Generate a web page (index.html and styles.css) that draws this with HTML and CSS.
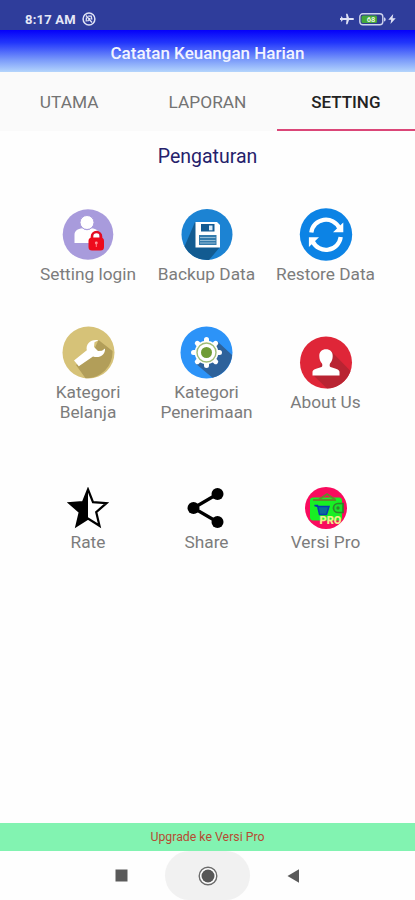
FILE: index.html
```html
<!DOCTYPE html>
<html lang="id">
<head>
<meta charset="utf-8">
<title>Catatan Keuangan Harian</title>
<link rel="stylesheet" href="styles.css">
</head>
<body>
<div class="statusbar">
  <span class="time">8:17 AM</span>
  <svg class="badge" width="14" height="14" viewBox="0 0 14 14" fill="none" stroke="#dfe2f5"><circle cx="7" cy="7" r="5.900" stroke-width="1.500"/><path d="M4 3.500l6 7M4.200 9.500l.2-4M6.200 4.200h3l.7 3.400M5.500 9.300l2.800-3" stroke-width="1.300"/></svg>
  <span class="spacer"></span>
  <svg width="14" height="12" viewBox="0 0 14 12" fill="#dfe2f5"><path d="M14 6c0-.7-.6-1.100-1.300-1.100H9L7.500.8H6l.5 4.100H2.800L1.700 3.600H.8L1.200 5.100H0v1.800h1.200L.8 8.400h.9L2.800 7.100h3.700L6 11.200h1.500L9 7.100h3.700c.7 0 1.300-.4 1.300-1.100z"/></svg>
  <svg class="battery" width="27" height="13" viewBox="0 0 27 13"><rect x=".8" y=".8" width="23" height="11" rx="3" fill="#2f3d91" stroke="#cfd4ef" stroke-width="1.400"/><rect x="2.500" y="2.500" width="15.500" height="7.600" rx="1.500" fill="#43a83b"/><path d="M25 4.200q1.700.3 1.700 2.200t-1.700 2.200z" fill="#cfd4ef"/><text class="charge" x="12" y="9.200" text-anchor="middle">68</text></svg>
  <svg class="bolt" width="8" height="12" viewBox="0 0 8 12" fill="#dfe2f5"><path d="M5.200 1L.3 6.800h2.900L2.500 11 7.700 5.200H4.600z"/></svg>
</div>
<header class="header">Catatan Keuangan Harian</header>
<nav class="tabs">
  <div class="tab">UTAMA</div>
  <div class="tab">LAPORAN</div>
  <div class="tab active">SETTING</div>
</nav>
<main class="main">
  <h1 class="title">Pengaturan</h1>
  <div class="grid">
    <div class="item">
      <svg width="52" height="53" viewBox="0 0 52 53"><circle cx="26" cy="26.500" r="25.300" fill="#a89bdc"/><path d="M12.500 35V27c0-4 3-6.500 8-6.800q4.500 4.200 9 0c5 .3 7.500 2.800 7.500 6.800v8z" fill="#fff"/><circle cx="25" cy="14.500" r="7" fill="#fff" stroke="#a89bdc"/><path d="M30 32v-3.500a4.500 4.500 0 0 1 9 0V32" fill="none" stroke="#e30b22" stroke-width="2.600"/><rect x="26.500" y="29.500" width="15.500" height="13" rx="3.500" fill="#ee0a1c"/><circle cx="34.300" cy="35" r="1.400" fill="#ff9b9f"/><path d="M34.300 35v4" stroke="#ff8187"/></svg>
      <span class="label">Setting login</span>
    </div>
    <div class="item">
      <svg width="52" height="53" viewBox="0 0 52 53"><circle cx="26" cy="26.500" r="25.500" fill="#1c83d3"/><path d="M14 14L3.500 38.500A25.500 25.500 0 0 0 28 52L39 39 28 28z" fill="#125b91"/><path d="M14.500 14H36l3 3v22.500H14.500z" fill="#fff"/><rect x="20" y="16" width="13.500" height="7.500" fill="#145b92"/><rect x="28" y="17.500" width="3.500" height="4.800" fill="#dcecf8"/><rect x="18" y="27" width="17.500" height="10" fill="#347bac"/><path d="M19 29.500h15.500M19 32.500h15.500M19 35h15.500" stroke="#a9cbe1" stroke-width=".8"/></svg>
      <span class="label">Backup Data</span>
    </div>
    <div class="item">
      <svg width="54" height="53" viewBox="0 0 52 53"><circle cx="26" cy="26.500" r="26.200" fill="#0c83e5"/><g fill="none" stroke="#fff" stroke-width="4.300"><path d="M11.300 24.500A14.800 14.800 0 0 1 39.300 20"/><path d="M40.700 29A14.800 14.800 0 0 1 12.700 33.500"/></g><path d="M33 24.200h10.300V14.500zM19 29.300H8.900v9.700z" fill="#fff"/></svg>
      <span class="label">Restore Data</span>
    </div>
    <div class="item">
      <svg width="53" height="53" viewBox="0 0 52 53"><circle cx="26" cy="26.500" r="26" fill="#d6c278"/><path d="M36 14L50 25A26 26 0 0 1 23 52.300L13.500 39 31 25z" fill="#b29e59"/><path d="M11.500 34.500L24.300 24.200C23 17.800 28.500 12.700 36 14.200L32 16.200 31.500 21 35.500 25 39.500 24.800 42.500 22.500C43 29 37 32.500 30.500 30.500L16.300 40.300z" fill="#fff"/></svg>
      <span class="label">Kategori<br>Belanja</span>
    </div>
    <div class="item">
      <svg width="53" height="53" viewBox="0 0 52 53"><circle cx="26" cy="26.500" r="26" fill="#2c93f8"/><path d="M37 15.500L51.600 29A26 26 0 0 1 32 51.700L15 37.500z" fill="#2e629b"/><g stroke="#fff" stroke-width="5" stroke-linecap="round"><path d="M26 13.500v26M13 26.500h26M16.800 17.300l18.400 18.400M35.200 17.300L16.800 35.700"/></g><circle cx="26" cy="26.500" r="11.800" fill="#fff"/><circle cx="26" cy="26.500" r="9.500" fill="#fff" stroke="#9fbd78" stroke-width="1.400"/><circle cx="26" cy="26.500" r="5.500" fill="#6f9c35"/></svg>
      <span class="label">Kategori<br>Penerimaan</span>
    </div>
    <div class="item">
      <svg width="54" height="53" viewBox="0 0 52 53"><circle cx="26" cy="26.500" r="26" fill="#df2638"/><path d="M31 15L50.500 35A26 26 0 0 1 27 52.500L13 39z" fill="#b92432"/><path d="M12.500 39.500v-3.500c0-3 5-3.500 9-5 1-.5 1-2 .5-3.500-1.700-2-2.700-4.500-2.700-7.500 0-4.500 2.700-6.800 6.700-6.800s6.700 2.300 6.700 6.800c0 3-1 5.500-2.700 7.500-.5 1.500-.5 3 .5 3.500 4 1.500 9 2 9 5v3.500z" fill="#fff"/></svg>
      <span class="label">About Us</span>
    </div>
    <div class="item">
      <svg width="42" height="42" viewBox="0 0 42 42"><path d="M21 2.500l5 12.700 13.500 1-10.300 8.900 3.300 13.700L21 31.600 9.500 38.800l3.300-13.700L2.500 16.200l13.500-1z" fill="#fff" stroke="#000" stroke-width="2.200"/><path d="M21 2.500v29.100L9.500 38.800l3.300-13.700L2.500 16.200l13.500-1z"/></svg>
      <span class="label">Rate</span>
    </div>
    <div class="item">
      <svg width="42" height="42" viewBox="0 0 42 42"><path d="M31.500 7L7.500 21l24 14" fill="none" stroke="#000" stroke-width="3.300"/><circle cx="31.500" cy="7" r="6"/><circle cx="7.500" cy="21" r="6"/><circle cx="31.500" cy="35" r="6"/></svg>
      <span class="label">Share</span>
    </div>
    <div class="item">
      <svg width="42" height="42" viewBox="0 0 42 42"><circle cx="21" cy="21" r="21" fill="#f90b5e"/><rect x="5" y="10.500" width="32" height="23" rx="3" fill="#18ef24"/><path d="M8 13h23M14 12.500l8-5.500 8 5.500" fill="none" stroke="#5f8c2a" stroke-width="1.800"/><path d="M9.500 18.500h3l2 9h7l2.500-8H13z" fill="#0b6b9b" stroke="#073bb0" stroke-width="1.500"/><path d="M38 16.500h-5a4.500 4.500 0 0 0 0 9h5z" fill="#17e52b" stroke="#31852b" stroke-width="1.700"/><circle cx="33" cy="21" r="1.700" fill="#31852b"/><text class="pro" x="25.500" y="37" text-anchor="middle">PRO</text></svg>
      <span class="label">Versi Pro</span>
    </div>
  </div>
</main>
<div class="upgrade">Upgrade ke Versi Pro</div>
<footer class="navbar">
  <svg width="13" height="13" viewBox="0 0 13 13"><rect x=".5" y=".5" width="12" height="12" fill="#5a5a5a"/></svg>
  <span class="home"><svg width="20" height="20" viewBox="0 0 20 20"><circle cx="10" cy="10" r="8.800" fill="#fff" stroke="#6b6b6b" stroke-width="1.400"/><circle cx="10" cy="10" r="6.500" fill="#575757"/></svg></span>
  <svg width="13" height="14" viewBox="0 0 13 14"><path d="M.5 7L12 .3v13.400z" fill="#5a5a5a"/></svg>
</footer>
</body>
</html>
```
FILE: styles.css
```css
* { box-sizing: border-box; }
body {
  margin: 0;
  width: 415px;
  height: 900px;
  display: flex;
  flex-direction: column;
  background: #fefefe;
  font-family: Roboto, "Liberation Sans", sans-serif;
  overflow: hidden;
}
svg { display: block; flex: none; }
.statusbar {
  height: 30px;
  padding: 8px 19px 0 25px;
  display: flex;
  align-items: center;
  background: #2f3d9b;
  color: #e6e8f7;
}
.time { font-size: 13px; font-weight: 700; letter-spacing: .2px; }
.badge { margin-left: 6px; }
.spacer { flex: 1; }
.battery { margin-left: 5px; }
.bolt { margin-left: 2px; }
.charge { font-size: 7.5px; font-weight: 700; fill: #e9f7df; }
.header {
  height: 42px;
  display: flex;
  align-items: center;
  justify-content: center;
  padding-top: 4px;
  background: linear-gradient(#0500fa, #2236fb 30%, #7c9cfa 72%, #b4d5fc);
  color: #f2f4ff;
  font-size: 17px;
  font-weight: 500;
}
.tabs {
  height: 59px;
  display: grid;
  grid-template-columns: repeat(3, 1fr);
  background: #fafafa;
}
.tab {
  display: flex;
  align-items: center;
  justify-content: center;
  padding-top: 3px;
  border-bottom: 2px solid transparent;
  color: #737373;
  font-size: 17.3px;
  font-weight: 400;
}
.tab.active {
  color: #222;
  border-color: #db4678;
  font-size: 17px;
  font-weight: 500;
}
.main { flex: 1; }
.title {
  margin: 14px 0 0;
  text-align: center;
  font-size: 19.5px;
  line-height: 24px;
  font-weight: 400;
  color: #25216b;
}
.grid {
  margin: 17px 29px 0 28px;
  display: grid;
  grid-template-columns: 120px 117px 121px;
  grid-template-rows: 119px 137px 154px;
}
.item {
  display: flex;
  flex-direction: column;
  align-items: center;
  justify-content: center;
}
.label {
  margin-top: 3px;
  text-align: center;
  white-space: nowrap;
  font-size: 17.3px;
  line-height: 20px;
  color: #7c7c7c;
}
.upgrade {
  height: 28px;
  display: flex;
  align-items: center;
  justify-content: center;
  background: #82f3b1;
  color: #b74b32;
  font-size: 12.3px;
}
.navbar {
  height: 49px;
  display: flex;
  align-items: center;
  justify-content: center;
  gap: 37px;
  background: #fefefe;
}
.home {
  width: 85px;
  height: 49px;
  border-radius: 25px;
  display: flex;
  align-items: center;
  justify-content: center;
  background: #f1f1f1;
}
.pro { font-size: 11px; font-weight: 900; fill: #f1ef8c; }
```
